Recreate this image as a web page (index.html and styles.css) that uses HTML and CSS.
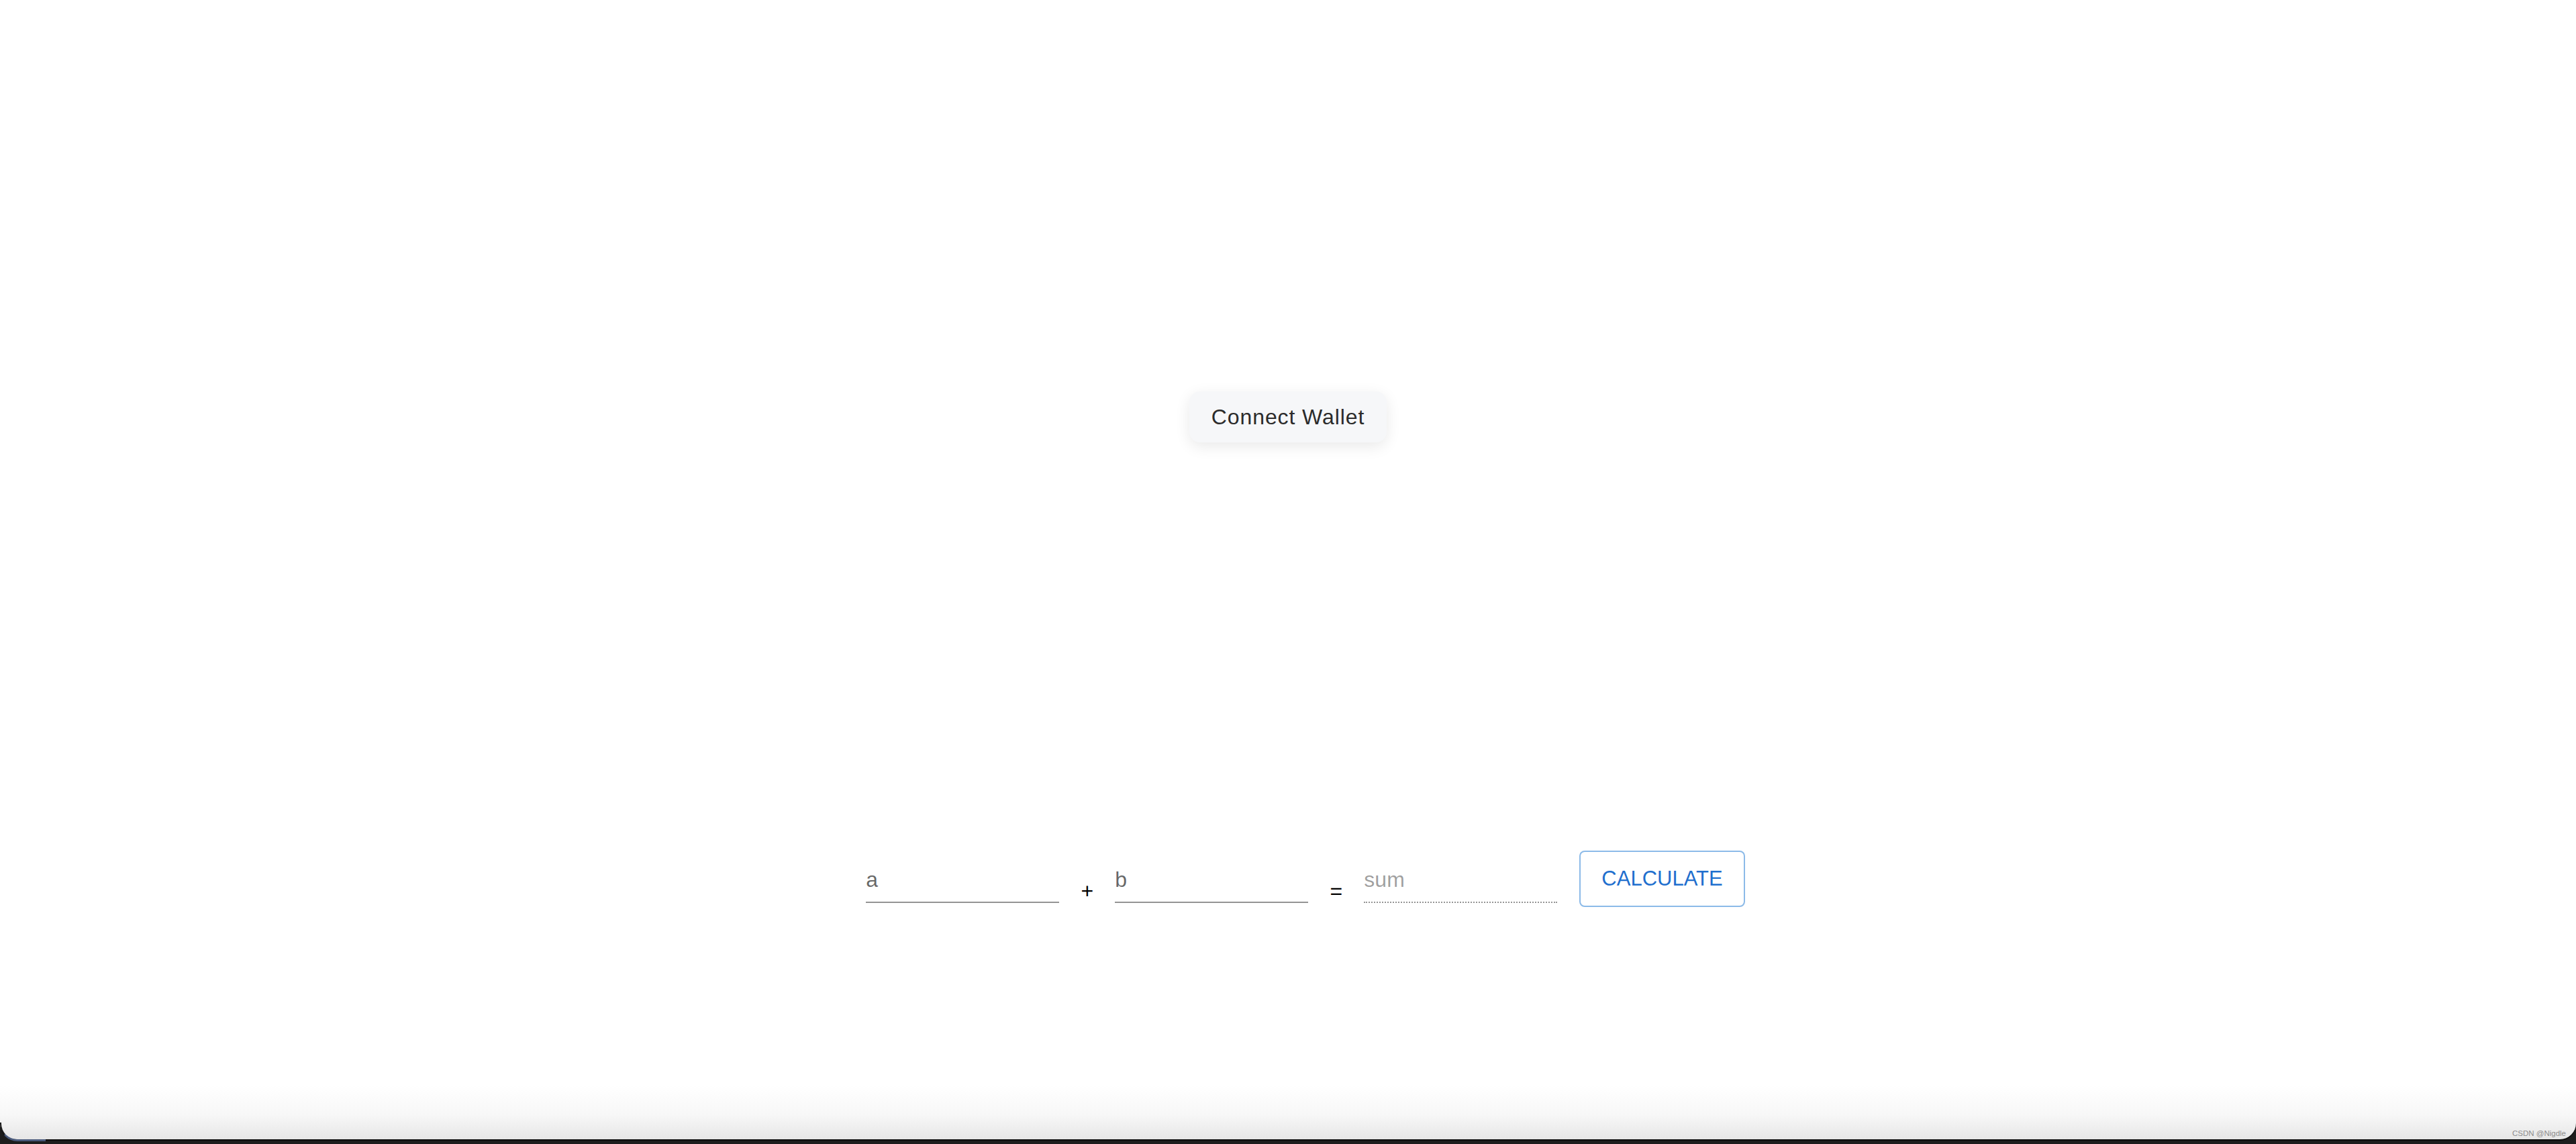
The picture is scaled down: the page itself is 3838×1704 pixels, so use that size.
FILE: index.html
```html
<!DOCTYPE html>
<html lang="en">
<head>
<meta charset="utf-8">
<title>Calculator</title>
<link rel="stylesheet" href="styles.css">
</head>
<body>
<div class="window">
  <header class="top">
    <button class="connect" type="button">Connect Wallet</button>
  </header>
  <form class="calc">
    <div class="field">
      <label class="field-label">a</label>
      <div class="field-input"><input type="text"></div>
    </div>
    <span class="op">+</span>
    <div class="field">
      <label class="field-label">b</label>
      <div class="field-input"><input type="text"></div>
    </div>
    <span class="op">=</span>
    <div class="field field-disabled">
      <label class="field-label">sum</label>
      <div class="field-input"><input type="text" disabled></div>
    </div>
    <button class="calc-btn" type="button">CALCULATE</button>
  </form>
  <div class="watermark">CSDN @Nigdle</div>
</div>
</body>
</html>
```

FILE: styles.css
```css
html, body {
  margin: 0;
  padding: 0;
  width: 100%;
  height: 100%;
  overflow: hidden;
  background: #1d1d1d;
}

.window {
  position: relative;
  height: 1697px;
  width: 100%;
  border-radius: 0 0 24px 24px;
  background: linear-gradient(180deg, #ffffff 0, #ffffff calc(100% - 80px), #f7f7f7 calc(100% - 35px), #e6e6e6 100%);
  box-shadow: 0 2px 0 #0b0b0b;
}

.window::before {
  content: "";
  position: absolute;
  left: 0;
  bottom: -3px;
  width: 68px;
  height: 28px;
  border-bottom: 3px solid #4a5a7c;
  border-left: 2px solid #1a1a1a;
  border-bottom-left-radius: 26px;
  box-sizing: border-box;
}

.top {
  display: flex;
  justify-content: center;
  padding-top: 583px;
}

.connect {
  height: 76px;
  padding: 0 33px;
  border: none;
  border-radius: 16px;
  background: #f6f7f9;
  color: #2b2b2b;
  font-family: "Liberation Sans", Arial, sans-serif;
  font-size: 32px;
  letter-spacing: 0.9px;
  line-height: 76px;
  box-shadow: 0 6px 22px rgba(0, 0, 0, 0.09);
  cursor: pointer;
}

.calc {
  display: flex;
  align-items: flex-start;
  justify-content: center;
  margin: 588px 0 0;
  padding-left: 52px;
  font-family: "Liberation Sans", Arial, sans-serif;
}

.field {
  position: relative;
  width: 288px;
  height: 96px;
}

.field-label {
  position: absolute;
  left: 0;
  top: 40px;
  font-size: 32px;
  line-height: 46px;
  color: rgba(0, 0, 0, 0.6);
}

.field-input {
  margin-top: 32px;
  padding: 8px 0 10px;
  border-bottom: 2px solid rgba(0, 0, 0, 0.42);
}

.field-input input {
  display: block;
  width: 100%;
  height: 46px;
  margin: 0;
  padding: 0;
  border: none;
  outline: none;
  background: transparent;
  font-family: inherit;
  font-size: 32px;
}

.field-disabled .field-label {
  color: rgba(0, 0, 0, 0.38);
}

.field-disabled .field-input {
  border-bottom: 2px dotted rgba(0, 0, 0, 0.42);
}

.op {
  width: 83px;
  margin-top: 57px;
  text-align: center;
  font-size: 32px;
  line-height: 46px;
  color: #000;
}

.calc-btn {
  margin: 20px 0 0 33px;
  padding: 18px 31px;
  border: 2px solid rgba(25, 118, 210, 0.5);
  border-radius: 8px;
  background: transparent;
  color: #1f6fce;
  font-family: "Liberation Sans", Arial, sans-serif;
  font-weight: 400;
  font-size: 31px;
  line-height: 44px;
  letter-spacing: 0;
  cursor: pointer;
}

.watermark {
  position: absolute;
  right: 15px;
  bottom: 3px;
  font-family: "Liberation Sans", Arial, sans-serif;
  font-size: 11.5px;
  line-height: 12px;
  color: #8c8c8c;
}
```
